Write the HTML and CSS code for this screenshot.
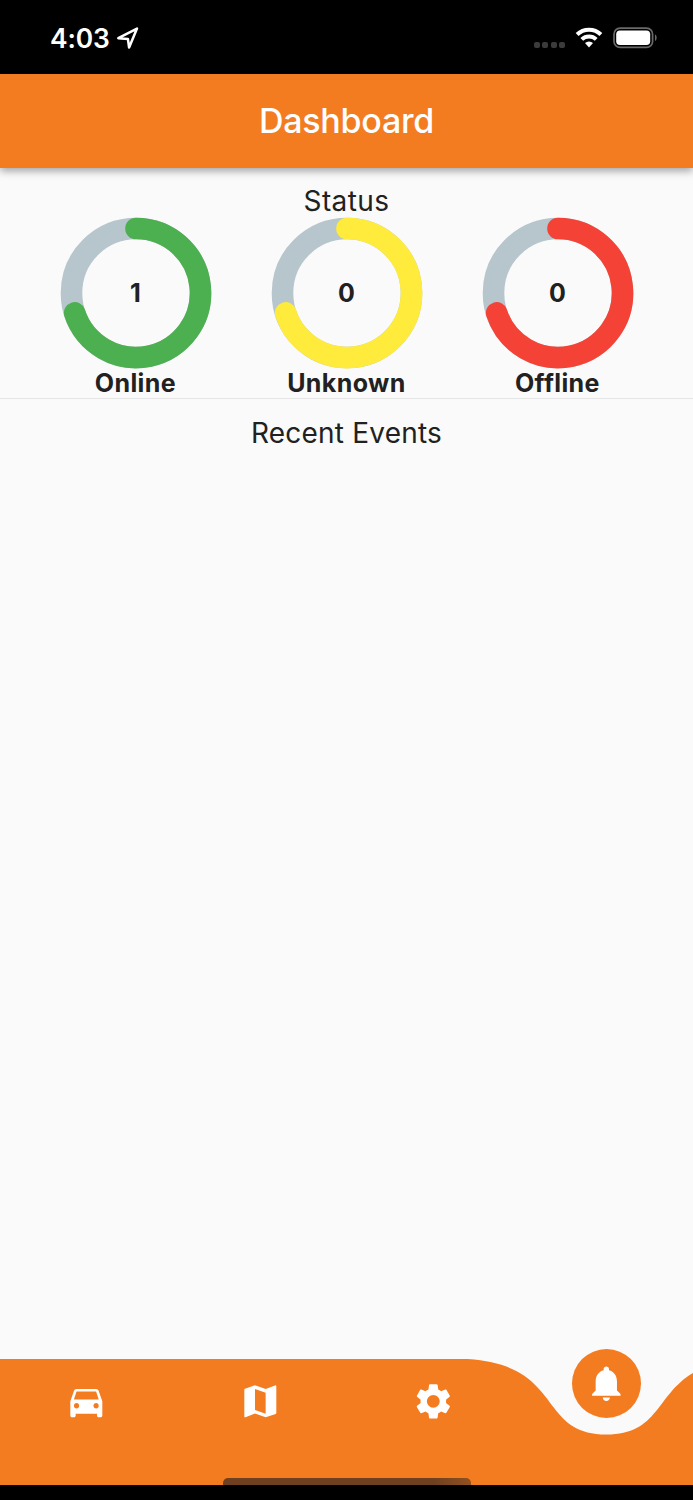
FILE: index.html
```
<!DOCTYPE html>
<html lang="en">
<head>
<meta charset="utf-8">
<title>Dashboard</title>
<link rel="stylesheet" href="styles.css">
</head>
<body>
<div class="screen">
  <div class="statusbar">
    <span class="time">4:03</span>
    <svg class="location" width="22" height="22" viewBox="0 0 22 22"><path d="M1.3 11.2 20 1.6 12.1 20.5 10.9 11.9Z"/></svg>
    <div class="indicators">
      <div class="cell"><i></i><i></i><i></i><i></i></div>
      <svg class="wifi" width="28" height="22" viewBox="0 0 28 22"><path class="arc" d="M2.1 7.5a17 17 0 0 1 23.8 0M6.8 12.4a10.4 10.4 0 0 1 14.4 0"/><path class="dot" d="M10 16.1a6 6 0 0 1 8 0L14 20.6Z"/></svg>
      <svg class="battery" width="45" height="22" viewBox="0 0 45 22"><rect class="shell" x="1" y="1.2" width="38.6" height="19.2" rx="6"/><rect class="charge" x="3.2" y="3.5" width="34" height="14.6" rx="3.8"/><path class="tip" d="M42 7.5c2.2 1 2.2 5.6 0 6.6Z"/></svg>
    </div>
  </div>
  <header class="appbar"><h1>Dashboard</h1></header>
  <main>
    <section class="status">
      <h2>Status</h2>
      <div class="rings">
        <div class="stat online">
          <div class="dial"><svg viewBox="0 0 152 152"><circle class="track" cx="76" cy="76" r="64.5"/><path class="value" d="M76 11.5A64.5 64.5 0 1 1 14.66 95.93"/></svg><span>1</span></div>
          <strong>Online</strong>
        </div>
        <div class="stat unknown">
          <div class="dial"><svg viewBox="0 0 152 152"><circle class="track" cx="76" cy="76" r="64.5"/><path class="value" d="M76 11.5A64.5 64.5 0 1 1 14.66 95.93"/></svg><span>0</span></div>
          <strong>Unknown</strong>
        </div>
        <div class="stat offline">
          <div class="dial"><svg viewBox="0 0 152 152"><circle class="track" cx="76" cy="76" r="64.5"/><path class="value" d="M76 11.5A64.5 64.5 0 1 1 14.66 95.93"/></svg><span>0</span></div>
          <strong>Offline</strong>
        </div>
      </div>
    </section>
    <section class="events"><h2>Recent Events</h2></section>
  </main>
  <nav class="navbar">
    <svg class="wave" viewBox="0 0 693 126"><path d="M0 0H467.8C564.8 6.3 537.1 75.5 606.4 75.5S648 6.3 745 0V126H0Z"/></svg>
    <div class="tabs">
      <a class="tab"><svg class="icon" viewBox="0 0 24 24"><path d="M18.92 6.01C18.72 5.42 18.16 5 17.5 5h-11c-.66 0-1.21.42-1.42 1.01L3 12v8c0 .55.45 1 1 1h1c.55 0 1-.45 1-1v-1h12v1c0 .55.45 1 1 1h1c.55 0 1-.45 1-1v-8l-2.08-5.99zM6.5 16c-.83 0-1.5-.67-1.5-1.5S5.67 13 6.5 13s1.5.67 1.5 1.5S7.33 16 6.5 16zm11 0c-.83 0-1.5-.67-1.5-1.5s.67-1.5 1.5-1.5 1.5.67 1.5 1.5-.67 1.5-1.5 1.5zM5 11l1.5-4.5h11L19 11H5z"/></svg></a>
      <a class="tab"><svg class="icon" viewBox="0 0 24 24"><path d="M20.5 3l-.16.03L15 5.1 9 3 3.36 4.9c-.21.07-.36.25-.36.48V20.5c0 .28.22.5.5.5l.16-.03L9 18.9l6 2.1 5.64-1.9c.21-.07.36-.25.36-.48V3.5c0-.28-.22-.5-.5-.5zM15 19l-6-2.11V5l6 2.11V19z"/></svg></a>
      <a class="tab"><svg class="icon" viewBox="0 0 24 24"><path d="M19.14 12.94c.04-.3.06-.61.06-.94 0-.32-.02-.64-.07-.94l2.03-1.58c.18-.14.23-.41.12-.61l-1.92-3.32c-.12-.22-.37-.29-.59-.22l-2.39.96c-.5-.38-1.03-.7-1.62-.94l-.36-2.54c-.04-.24-.24-.41-.48-.41h-3.84c-.24 0-.43.17-.47.41l-.36 2.54c-.59.24-1.13.57-1.62.94l-2.39-.96c-.22-.08-.47 0-.59.22L2.74 8.87c-.12.21-.08.47.12.61l2.03 1.58c-.05.3-.09.63-.09.94s.02.64.07.94l-2.03 1.58c-.18.14-.23.41-.12.61l1.92 3.32c.12.22.37.29.59.22l2.39-.96c.5.38 1.03.7 1.62.94l.36 2.54c.05.24.24.41.48.41h3.84c.24 0 .44-.17.47-.41l.36-2.54c.59-.24 1.13-.56 1.62-.94l2.39.96c.22.08.47 0 .59-.22l1.92-3.32c.12-.22.07-.47-.12-.61l-2.01-1.58zM12 15.6c-1.98 0-3.6-1.62-3.6-3.6s1.62-3.6 3.6-3.6 3.6 1.62 3.6 3.6-1.62 3.6-3.6 3.6z"/></svg></a>
      <a class="tab active"><span class="bubble"><svg class="icon" viewBox="0 0 24 24"><path d="M12 22c1.1 0 2-.9 2-2h-4c0 1.1.89 2 2 2zm6-6v-5c0-3.07-1.64-5.64-4.5-6.32V4c0-.83-.67-1.5-1.5-1.5s-1.5.67-1.5 1.5v.68C7.63 5.36 6 7.92 6 11v5l-2 2v1h16v-1l-2-2z"/></svg></span></a>
    </div>
    <div class="home"></div>
  </nav>
  <div class="edge"></div>
</div>
</body>
</html>
```
FILE: styles.css
```
* { box-sizing: border-box; }
body { margin: 0; background: #fafafa; font-family: Inter, "Liberation Sans", sans-serif; color: #212121; }
h1, h2 { margin: 0; font-weight: 400; }
svg { display: block; }
.screen { width: 693px; height: 1500px; display: flex; flex-direction: column; overflow: hidden; }
.statusbar { height: 74px; flex: none; background: #000; color: #fff; display: flex; align-items: center; padding: 2px 35px 0 50px; }
.time { font-size: 26.4px; font-weight: 600; width: 67px; letter-spacing: -.15px; line-height: 32px; }
.location { fill: none; stroke: #fff; stroke-width: 2.5; stroke-linejoin: round; }
.indicators { display: flex; align-items: center; margin-left: auto; gap: 10px; }
.cell { display: flex; gap: 2.4px; padding-top: 13px; }
.cell i { width: 6px; height: 6px; border-radius: 2px; background: #3b3b3b; }
.wifi .arc { fill: none; stroke: #fff; stroke-width: 4; }
.wifi .dot { fill: #fff; }
.battery .shell { fill: none; stroke: #696969; stroke-width: 1.7; }
.battery .charge { fill: #fff; }
.battery .tip { fill: #696969; }
.appbar { height: 93.5px; flex: none; background: #f47c20; color: #fff; display: flex; align-items: center; justify-content: center; box-shadow: 0 3px 8px rgba(0,0,0,.36); position: relative; }
.appbar h1 { font-size: 34px; font-weight: 500; line-height: 42px; letter-spacing: -.25px; }
main { flex: 1; }
.status { border-bottom: 1px solid #e5e5e5; height: 231.5px; padding-top: 16px; }
h2 { font-size: 28px; line-height: 34px; text-align: center; letter-spacing: .22px; }
.status h2 { letter-spacing: .4px; height: 33px; }
.rings { display: flex; justify-content: space-between; padding: 0 29.7px 0 30.5px; }
.stat { width: 210.8px; display: flex; flex-direction: column; align-items: center; }
.dial { display: grid; place-items: center; width: 152px; height: 152px; }
.dial > * { grid-area: 1 / 1; }
.dial svg { width: 152px; height: 152px; }
.dial span, .stat strong { font-size: 25px; font-weight: 650; line-height: 28px; }
.dial span { margin-right: 1px; }
.stat strong { letter-spacing: .4px; margin-right: 1px; }
.track { fill: none; stroke: #b7c6cc; stroke-width: 21.6; }
.value { fill: none; stroke-width: 21.6; stroke-linecap: round; }
.online .value { stroke: #4caf50; }
.unknown .value { stroke: #ffeb3b; }
.offline .value { stroke: #f44336; }
.events { padding-top: 16.5px; }
.navbar { height: 126px; flex: none; position: relative; }
.wave { position: absolute; inset: 0; width: 693px; height: 126px; fill: #f47c20; }
.tabs { position: relative; display: grid; grid-template-columns: repeat(4, 1fr); height: 85px; align-items: center; }
.tab { display: grid; place-items: center; color: #fff; }
.icon { width: 42.65px; height: 42.65px; fill: #fff; }
.active { align-self: start; margin-top: -10px; }
.bubble { width: 69px; height: 69px; border-radius: 50%; background: #f47c20; display: grid; place-items: center; }
.home { position: absolute; left: 222.5px; bottom: 0; width: 248px; height: 7px; border-radius: 5px 5px 0 0; background: linear-gradient(90deg, #6e4020 85%, #91511f); }
.edge { height: 15px; flex: none; background: #000; }
```
